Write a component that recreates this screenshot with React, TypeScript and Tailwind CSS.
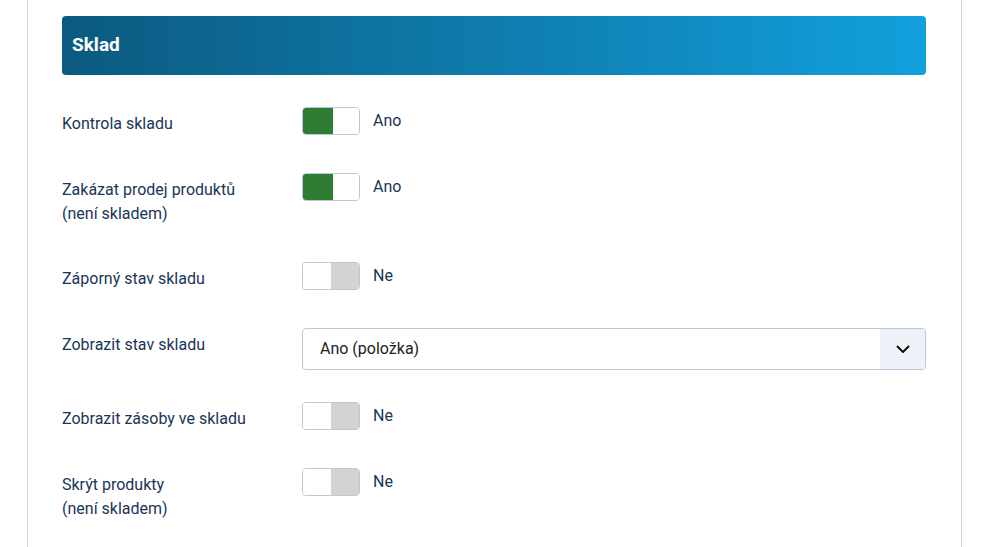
import React from "react";

function Toggle({ on }: { on: boolean }) {
  return (
    <div className="flex items-center gap-[13px]">
      <div className="flex h-[28px] w-[58px] overflow-hidden rounded-[4px] border border-[#b9c9dd]">
        {on ? (
          <>
            <div className="w-[30px] bg-[#2e7d32]" />
            <div className="flex-1 bg-white" />
          </>
        ) : (
          <>
            <div className="w-[28px] bg-white" />
            <div className="flex-1 bg-[#d3d3d3]" />
          </>
        )}
      </div>
      <span className="text-[16px] leading-[24px] text-[#1a3556]">{on ? "Ano" : "Ne"}</span>
    </div>
  );
}

function Row({ label, children, h }: { label: React.ReactNode; children: React.ReactNode; h: string }) {
  return (
    <div className={`flex ${h}`}>
      <div className="w-[240px] pt-[5px] text-[16px] leading-[24px] text-[#1a3556]">{label}</div>
      <div className="flex-1">{children}</div>
    </div>
  );
}

export default function App() {
  return (
    <div className="h-[547px] w-[983px] overflow-hidden bg-white" style={{ fontFamily: "Roboto, 'Noto Sans', sans-serif" }}>
      <div className="ml-[27px] h-full w-[935px] border-x border-[#c9d3e1] pl-[34px] pr-[35px] pt-[16px]">
        <div className="flex h-[59px] items-center rounded-[4px] bg-gradient-to-r from-[#0b5a80] to-[#12a0dd] px-[10px]">
          <span className="text-[19px] font-bold text-white">Sklad</span>
        </div>
        <div className="mt-[32px] flex flex-col">
          <Row h="h-[66px]" label="Kontrola skladu">
            <Toggle on />
          </Row>
          <Row h="h-[89px]" label={<>Zakázat prodej produktů<br />(není skladem)</>}>
            <Toggle on />
          </Row>
          <Row h="h-[66px]" label="Záporný stav skladu">
            <Toggle on={false} />
          </Row>
          <Row h="h-[74px]" label="Zobrazit stav skladu">
            <div className="flex h-[42px] items-stretch overflow-hidden rounded-[4px] border border-[#b9c9dd]">
              <div className="flex flex-1 items-center pl-[17px] text-[16px] text-[#222222]">Ano (položka)</div>
              <div className="flex w-[45px] items-center justify-center bg-[#eef2f8]">
                <svg width="14" height="9" viewBox="0 0 14 9" fill="none">
                  <path d="M1.5 1.5L7 7L12.5 1.5" stroke="#111" strokeWidth="2" strokeLinecap="round" strokeLinejoin="round" />
                </svg>
              </div>
            </div>
          </Row>
          <Row h="h-[66px]" label="Zobrazit zásoby ve skladu">
            <Toggle on={false} />
          </Row>
          <Row h="h-[60px]" label={<>Skrýt produkty<br />(není skladem)</>}>
            <Toggle on={false} />
          </Row>
        </div>
      </div>
    </div>
  );
}
